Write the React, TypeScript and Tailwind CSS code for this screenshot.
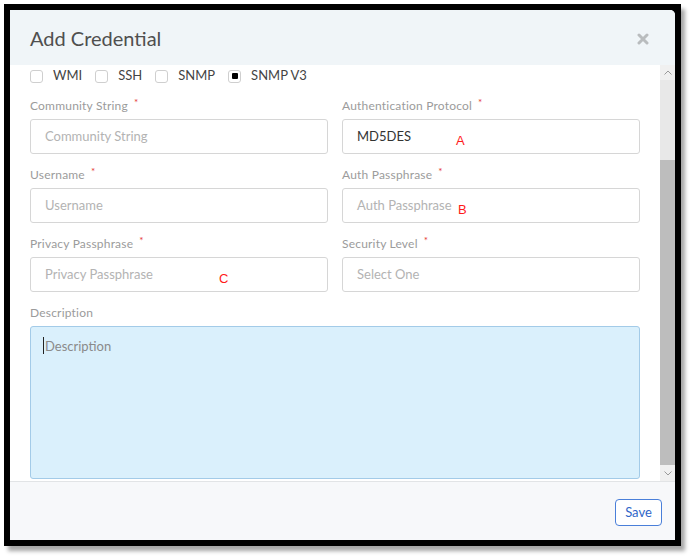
import React from "react";

function Req() {
    return <span className="ml-[6px] text-[10px] text-[#e53935] relative -top-[4px]">*</span>
}

function Field({ label, placeholder, value, mark, markX }: { label: string; placeholder: string; value?: string; mark?: string; markX?: number }) {
    return (
        <div className="flex flex-col">
            <label className="h-[16px] mb-[5px] text-[12px] leading-[16px] text-[#9b9b9b] tracking-[0.2px]">
                {label}<Req />
            </label>
            <div className="relative h-[35px] border border-[#d6d6d6] rounded-[3px] bg-white flex items-center px-[14px] text-[13px]">
                {value
                    ? <span className="text-[#333]">{value}</span>
                    : <span className="text-[#b3b3b3]">{placeholder}</span>}
                {mark && (
                    <span className="absolute top-[11px] text-[13px] text-[#ff1a1a] font-['Liberation_Sans']" style={{ left: markX }}>{mark}</span>
                )}
            </div>
        </div>
    )
}

function Check({ label, checked }: { label: string; checked?: boolean }) {
    return (
        <div className="flex items-center gap-[10px]">
            <div className="w-[13px] h-[13px] border border-[#cfcfcf] rounded-[3px] flex items-center justify-center bg-white">
                {checked && <div className="w-[6px] h-[6px] bg-black rounded-[1px]" />}
            </div>
            <span className="text-[13px] text-[#444]">{label}</span>
        </div>
    )
}

export default function App() {
    return (
        <div className="w-[695px] h-[560px] bg-white font-['Lato',sans-serif] pt-[4px] pl-[4px]">
            <div className="w-[677px] h-[542px] border-[6px] border-black shadow-[4px_5px_4px_rgba(0,0,0,0.35)] bg-black">
                <div className="w-full h-full rounded-tr-[5px] overflow-hidden flex flex-col bg-white">
                    {/* Header */}
                    <div className="h-[55px] shrink-0 bg-[#f0f5f8] flex items-center justify-between pl-[20px] pr-[26px]">
                        <h1 className="text-[20px] text-[#4f4f4f] pt-[1px]">Add Credential</h1>
                        <svg width="12" height="12" viewBox="0 0 12 12" className="mt-[2px]">
                            <path d="M2 2 L10 10 M10 2 L2 10" stroke="#b9bcbe" strokeWidth="3" strokeLinecap="round" />
                        </svg>
                    </div>

                    {/* Body */}
                    <div className="h-[416px] shrink-0 flex">
                        <div className="flex-1 px-[20px] pt-[3px]">
                            <div className="h-[16px] flex items-center gap-[13px] mb-[14px]">
                                <Check label="WMI" />
                                <Check label="SSH" />
                                <Check label="SNMP" />
                                <Check label="SNMP V3" checked />
                            </div>
                            <div className="grid grid-cols-2 gap-x-[14px] gap-y-[13px]">
                                <Field label="Community String" placeholder="Community String" />
                                <Field label="Authentication Protocol" placeholder="" value="MD5DES" mark="A" markX={113} />
                                <Field label="Username" placeholder="Username" />
                                <Field label="Auth Passphrase" placeholder="Auth Passphrase" mark="B" markX={115} />
                                <Field label="Privacy Passphrase" placeholder="Privacy Passphrase" mark="C" markX={188} />
                                <Field label="Security Level" placeholder="Select One" />
                            </div>
                            <div className="mt-[13px] flex flex-col">
                                <label className="h-[16px] mb-[5px] text-[12px] leading-[16px] text-[#9b9b9b] tracking-[0.2px]">Description</label>
                                <div className="h-[153px] border border-[#a3cbe8] rounded-[3px] bg-[#daf0fc] px-[12px] pt-[10px] text-[13px] text-[#8a8a8a] flex items-start">
                                    <span className="w-px h-[17px] bg-[#222] mr-[1px]" />
                                    <span>Description</span>
                                </div>
                            </div>
                        </div>
                        {/* Scrollbar */}
                        <div className="w-[15px] shrink-0 flex flex-col bg-[#e8e8e8]">
                            <div className="h-[15px] bg-[#f0f0f0] flex items-center justify-center">
                                <svg width="8" height="5" viewBox="0 0 8 5"><path d="M0.5 4.5 L4 1 L7.5 4.5" stroke="#9a9a9a" fill="none" strokeWidth="1" /></svg>
                            </div>
                            <div className="h-[80px]" />
                            <div className="flex-1 bg-[#bdbdbd]" />
                            <div className="h-[16px] bg-[#f0f0f0] flex items-center justify-center">
                                <svg width="8" height="5" viewBox="0 0 8 5"><path d="M0.5 0.5 L4 4 L7.5 0.5" stroke="#9a9a9a" fill="none" strokeWidth="1" /></svg>
                            </div>
                        </div>
                    </div>

                    {/* Footer */}
                    <div className="flex-1 bg-[#f7f8fa] border-t border-[#e2e4e6] flex items-start justify-end pt-[17px] pr-[13px]">
                        <button className="w-[47px] h-[27px] border border-[#4a7fd9] rounded-[4px] bg-white text-[13px] text-[#2f66c8]">Save</button>
                    </div>
                </div>
            </div>
        </div>
    )
}
